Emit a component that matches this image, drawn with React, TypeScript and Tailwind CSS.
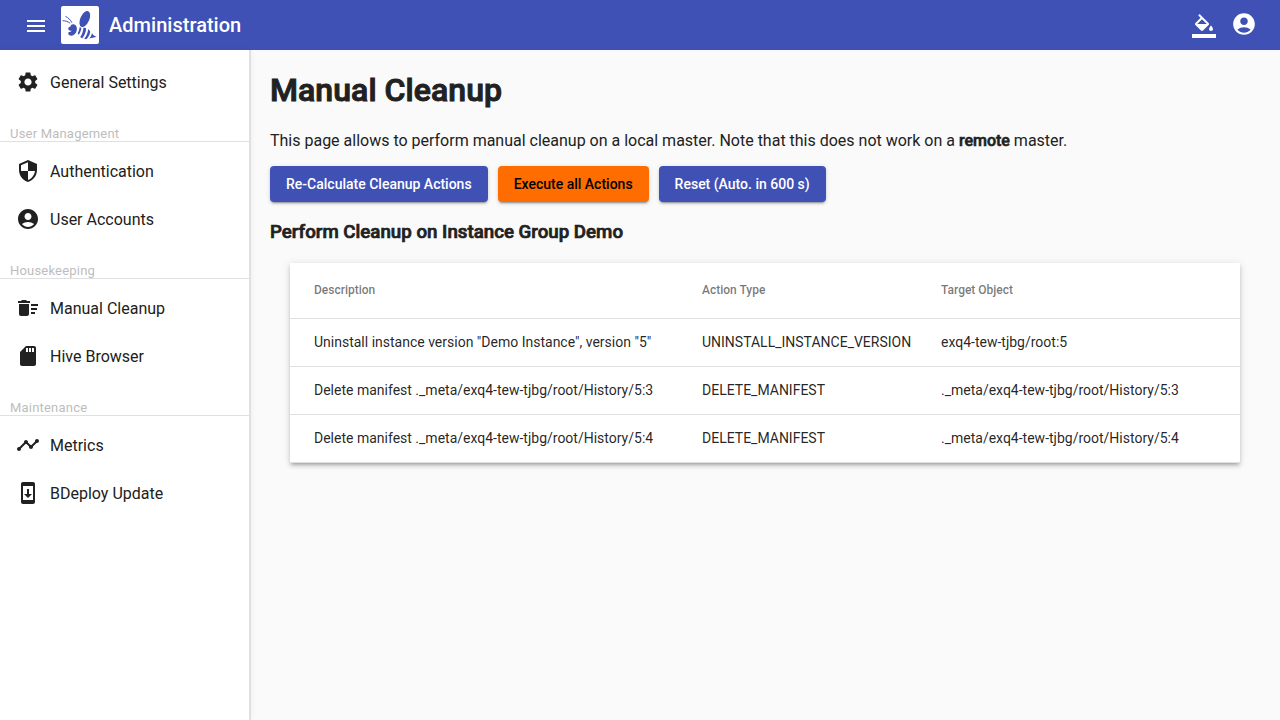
import type { ReactNode } from "react";
import type { IconType } from "react-icons";
import {
  MdAccountCircle,
  MdDeleteSweep,
  MdMenu,
  MdSdCard,
  MdSecurity,
  MdSettings,
  MdSystemUpdate,
  MdTimeline,
} from "react-icons/md";

function BeeLogo() {
  return (
    <svg viewBox="0 0 38 38" className="size-[38px] rounded-[2px] bg-white" fill="#3f51b5">
      <ellipse cx="23.8" cy="13" rx="4.5" ry="8.5" transform="rotate(24 23.8 13)" />
      <path d="M9.6 20.4C9.6 18.6 12 17.8 13.8 18.8C16.2 20 16.4 23.8 15 26.6C13.4 29.6 10.2 30.6 8 29C6.9 27.8 7.2 26.6 8 25.9C9.2 26.2 10.2 25.6 10.6 24.8C9.2 25 7.4 24.4 7.2 22.8C7.2 21.6 8.2 20.6 9.6 20.4Z" />
      <path d="M18.6 21.2L20.4 21.8C20 24.6 19.2 26.8 18 28.6C17.2 28.4 16.8 27.8 16.8 27.2C17.8 25.4 18.4 23.2 18.6 21.2Z" />
      <path d="M22.4 21.7C24 21.5 24.8 22 25.2 22.8C24.8 26.6 23.4 29.8 21.2 32.2C20.2 32 19.6 31.5 19.3 31C21.2 28.4 22.2 25.2 22.4 21.7Z" />
      <path d="M27.2 23.2C28.4 24 29 24.8 29.2 26C28.8 28.6 27.4 31.2 25.6 33C24.6 33.2 24 33.2 23.2 33C25.4 30.2 26.8 27 27.2 23.2Z" />
      <path d="M31 26.8C31.4 28.4 32.6 29.6 35.8 31C32.8 31.2 31 32 28.2 32.6C29.8 31 30.6 29.2 31 26.8Z" />
      <path
        d="M2 14.7C4.6 14.8 6.8 15.5 8.8 17M4.8 10.5C7.4 11.8 9.4 13.8 10.8 16.4"
        fill="none"
        stroke="#3f51b5"
        strokeWidth="1"
        strokeLinecap="round"
      />
    </svg>
  );
}

function PaintBucketIcon({ className }: { className: string }) {
  return (
    <svg viewBox="0 0 24 24" className={className} fill="currentColor">
      <path d="M16.56 8.94L7.62 0 6.21 1.41l2.38 2.38-5.15 5.15c-.59.59-.59 1.54 0 2.12l5.5 5.5c.29.29.68.44 1.06.44s.77-.15 1.06-.44l5.5-5.5c.59-.58.59-1.53 0-2.12zM5.21 10L10 5.21 14.79 10H5.21zM19 11.5s-2 2.17-2 3.5c0 1.1.9 2 2 2s2-.9 2-2c0-1.33-2-3.5-2-3.5z" />
      <path d="M0 20h24v4H0z" />
    </svg>
  );
}

function NavItem({ icon: Icon, label }: { icon: IconType; label: string }) {
  return (
    <a className="flex h-12 items-center gap-[10px] pl-4 text-base">
      <Icon className="size-6" />
      <span className="pt-[2px]">{label}</span>
    </a>
  );
}

function NavSection({ title, children }: { title: string; children: ReactNode }) {
  return (
    <section>
      <h4 className="mt-5 flex h-[16px] items-end border-b border-black/12 pl-[10px] text-[13px] leading-[15px] tracking-[0.2px] text-[#bdbdbd]">
        {title}
      </h4>
      <div className="pt-[5px]">{children}</div>
    </section>
  );
}

function ActionButton({ children, accent = false }: { children: ReactNode; accent?: boolean }) {
  return (
    <button
      className={`h-9 rounded-[4px] px-4 text-sm font-medium shadow-[0_3px_1px_-2px_rgba(0,0,0,0.2),0_2px_2px_0_rgba(0,0,0,0.14),0_1px_5px_0_rgba(0,0,0,0.12)] ${
        accent ? "bg-[#ff6d00] text-black" : "bg-[#3f51b5] text-white"
      }`}
    >
      {children}
    </button>
  );
}

const rows = [
  ['Uninstall instance version "Demo Instance", version "5"', "UNINSTALL_INSTANCE_VERSION", "exq4-tew-tjbg/root:5"],
  ["Delete manifest ._meta/exq4-tew-tjbg/root/History/5:3", "DELETE_MANIFEST", "._meta/exq4-tew-tjbg/root/History/5:3"],
  ["Delete manifest ._meta/exq4-tew-tjbg/root/History/5:4", "DELETE_MANIFEST", "._meta/exq4-tew-tjbg/root/History/5:4"],
];

export default function App() {
  return (
    <div className="flex h-screen flex-col overflow-hidden bg-[#fafafa] font-[Roboto,sans-serif] text-[#212121]">
      <header className="flex h-[50px] shrink-0 items-center bg-[#3f51b5] pr-[23px] pl-6 text-white">
        <MdMenu className="mt-[2px] mr-[13px] size-6" />
        <BeeLogo />
        <h1 className="ml-[10px] text-xl font-medium tracking-[0.02px]">Administration</h1>
        <div className="ml-auto flex items-center gap-[15px]">
          <PaintBucketIcon className="mt-[2px] size-6" />
          <MdAccountCircle className="mb-[2px] size-[26px]" />
        </div>
      </header>
      <div className="flex min-h-0 flex-1">
        <nav className="w-[251px] shrink-0 border-r-2 border-[#e0e0e0] bg-white pt-2 shadow-[0_0_6px_rgba(0,0,0,0.06)]">
          <NavItem icon={MdSettings} label="General Settings" />
          <NavSection title="User Management">
            <NavItem icon={MdSecurity} label="Authentication" />
            <NavItem icon={MdAccountCircle} label="User Accounts" />
          </NavSection>
          <NavSection title="Housekeeping">
            <NavItem icon={MdDeleteSweep} label="Manual Cleanup" />
            <NavItem icon={MdSdCard} label="Hive Browser" />
          </NavSection>
          <NavSection title="Maintenance">
            <NavItem icon={MdTimeline} label="Metrics" />
            <NavItem icon={MdSystemUpdate} label="BDeploy Update" />
          </NavSection>
        </nav>
        <main className="min-w-0 flex-1 pt-5 pr-10 pl-[19px]">
          <h1 className="text-[32px] leading-10 font-medium tracking-[0.06px] [-webkit-text-stroke:1px_#212121]">
            Manual Cleanup
          </h1>
          <p className="mt-[19px] text-base leading-6 tracking-[-0.004px]">
            This page allows to perform manual cleanup on a local master. Note that this does not work on a{" "}
            <strong className="font-medium [-webkit-text-stroke:0.62px_#212121]">remote</strong> master.
          </p>
          <div className="mt-[13px] flex gap-[10px]">
            <ActionButton>Re-Calculate Cleanup Actions</ActionButton>
            <ActionButton accent>Execute all Actions</ActionButton>
            <ActionButton>Reset (Auto. in 600 s)</ActionButton>
          </div>
          <h3 className="mt-[19px] text-[18.72px] leading-[22px] font-medium [-webkit-text-stroke:0.7px_#212121]">
            Perform Cleanup on Instance Group Demo
          </h3>
          <div className="mt-5 ml-5 bg-white shadow-[0_3px_3px_-2px_rgba(0,0,0,0.2),0_3px_4px_0_rgba(0,0,0,0.14),0_1px_8px_0_rgba(0,0,0,0.12)]">
            <div className="grid h-14 grid-cols-[388px_239px_1fr] items-center border-b border-black/12 pb-[2px] pl-6 text-xs font-medium text-black/54">
              <span>Description</span>
              <span>Action Type</span>
              <span>Target Object</span>
            </div>
            {rows.map((row) => (
              <div
                key={row[0]}
                className="grid h-12 grid-cols-[388px_239px_1fr] items-center border-b border-black/12 pb-[2px] pl-6 text-sm text-black/87"
              >
                {row.map((cell) => (
                  <span key={cell}>{cell}</span>
                ))}
              </div>
            ))}
          </div>
        </main>
      </div>
    </div>
  );
}
